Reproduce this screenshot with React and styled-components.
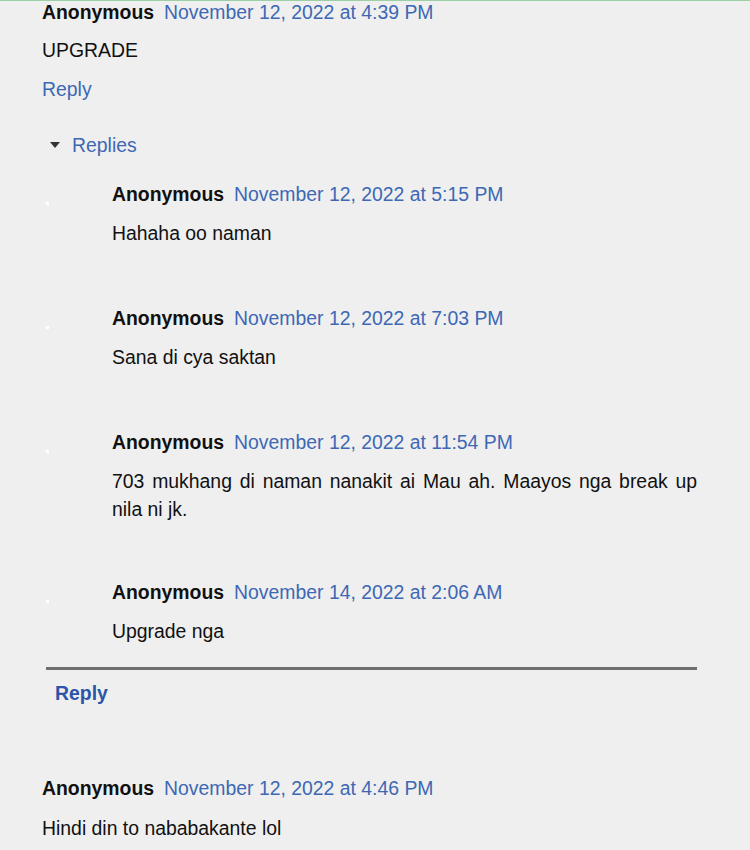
import React from "react";
import styled, { createGlobalStyle } from "styled-components";

const Global = createGlobalStyle`
  html, body { margin: 0; padding: 0; background: #efefef; }
  body { font-family: "Liberation Sans", Arial, sans-serif; font-size: 19.4px; color: #111; }
`;

const Page = styled.div`
  border-top: 1px solid #9bcfa6;
  width: 750px;
  height: 849px;
  overflow: hidden;
  padding: 0 53px 0 42px;
  box-sizing: border-box;
`;

const Comment = styled.div`
  margin-top: ${(p) => p.$top || 0}px;
`;

const Header = styled.div`
  line-height: 24px;
  white-space: nowrap;
`;

const Author = styled.span`
  font-weight: bold;
  color: #111;
`;

const DateLink = styled.a`
  color: #3d68b4;
  text-decoration: none;
  margin-left: 10px;
`;

const Body = styled.div`
  line-height: 28px;
  margin-top: ${(p) => p.$gap ?? 12}px;
  text-align: justify;
`;

const ReplyLink = styled.a`
  display: block;
  color: ${(p) => (p.$bold ? "#2b55a8" : "#3d68b4")};
  font-weight: ${(p) => (p.$bold ? "bold" : "normal")};
  text-decoration: none;
  line-height: 24px;
  margin-top: ${(p) => p.$top || 0}px;
  padding-left: ${(p) => p.$indent || 0}px;
`;

const Thread = styled.div`
  margin: 32px 0 0 4px;
`;

const Toggle = styled.div`
  display: flex;
  align-items: center;
  gap: 12px;
  line-height: 24px;
  padding-left: 4px;
  color: #3d68b4;
`;

const Caret = styled.span`
  width: 0;
  height: 0;
  border-left: 5.5px solid transparent;
  border-right: 5.5px solid transparent;
  border-top: 6px solid #333;
`;

const Item = styled.div`
  display: grid;
  grid-template-columns: 66px 1fr;
  margin-top: ${(p) => p.$top}px;
`;

const Avatar = styled.div`
  position: relative;
`;

const Dot = styled.span`
  position: absolute;
  left: 0;
  top: 20px;
  width: 3px;
  height: 3px;
  background: #ffffff;
`;

const Divider = styled.hr`
  border: none;
  height: 3px;
  background: #6f6f6f;
  margin: 22px 0 0;
`;

const replies = [
  { date: "November 12, 2022 at 5:15 PM", text: "Hahaha oo naman", top: 25 },
  { date: "November 12, 2022 at 7:03 PM", text: "Sana di cya saktan", top: 59 },
  {
    date: "November 12, 2022 at 11:54 PM",
    text: "703 mukhang di naman nanakit ai Mau ah. Maayos nga break up nila ni jk.",
    top: 59,
  },
  { date: "November 14, 2022 at 2:06 AM", text: "Upgrade nga", top: 57 },
];

export default function App() {
  return (
    <>
      <Global />
      <Page>
        <Comment $top={-1}>
          <Header>
            <Author>Anonymous</Author>
            <DateLink>November 12, 2022 at 4:39 PM</DateLink>
          </Header>
          <Body>UPGRADE</Body>
          <ReplyLink $top={13}>Reply</ReplyLink>
        </Comment>
        <Thread>
          <Toggle>
            <Caret />
            <span>Replies</span>
          </Toggle>
          {replies.map((r, i) => (
            <Item key={i} $top={r.top}>
              <Avatar>
                <Dot />
              </Avatar>
              <div>
                <Header>
                  <Author>Anonymous</Author>
                  <DateLink>{r.date}</DateLink>
                </Header>
                <Body $gap={13}>{r.text}</Body>
              </div>
            </Item>
          ))}
          <Divider />
          <ReplyLink $bold $top={11} $indent={9}>Reply</ReplyLink>
        </Thread>
        <Comment $top={71}>
          <Header>
            <Author>Anonymous</Author>
            <DateLink>November 12, 2022 at 4:46 PM</DateLink>
          </Header>
          <Body $gap={14}>Hindi din to nababakante lol</Body>
        </Comment>
      </Page>
    </>
  );
}
